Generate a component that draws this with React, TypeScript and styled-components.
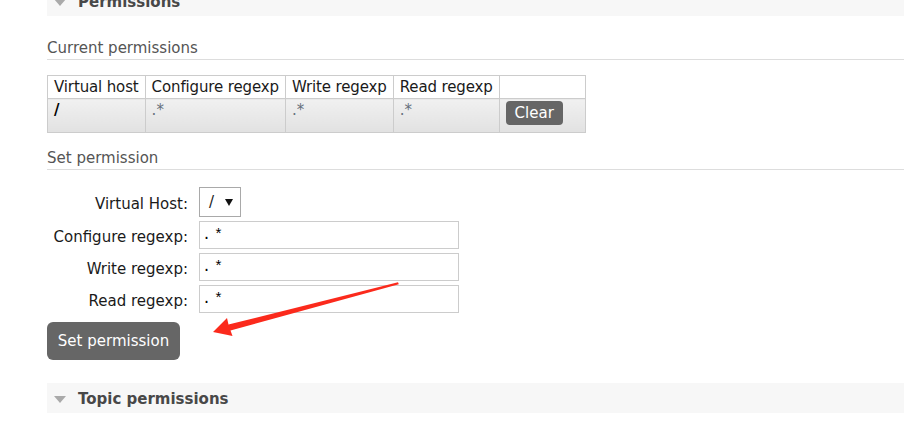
import React from "react";
import styled, { createGlobalStyle } from "styled-components";

const Global = createGlobalStyle`
  html, body { margin: 0; padding: 0; background: #fff; }
  body {
    font-family: "DejaVu Sans", Verdana, sans-serif;
    font-size: 15px;
    line-height: 18px;
    color: #222;
  }
`;

const Page = styled.div`
  position: relative;
  display: flow-root;
  width: 904px;
  height: 428px;
  overflow: hidden;
  padding-left: 47px;
  box-sizing: border-box;
`;

const Band = styled.div<{ $first?: boolean }>`
  display: flex;
  align-items: center;
  gap: 12px;
  box-sizing: border-box;
  height: 30px;
  padding: 2px 0 0 7px;
  margin-top: ${(p) => (p.$first ? "-14px" : "23px")};
  background: #f7f7f7;
  color: #484848;
  font-weight: bold;
`;

const Caret = styled.span`
  width: 0;
  height: 0;
  border-left: 6.5px solid transparent;
  border-right: 6.5px solid transparent;
  border-top: 7px solid #aaa;
`;

const SectionTitle = styled.h3<{ $gap: number }>`
  margin: ${(p) => p.$gap}px 0 0;
  padding: 0 0 2px;
  font-size: 15px;
  font-weight: normal;
  line-height: 18px;
  color: #555;
  border-bottom: 1px solid #ddd;
`;

const Table = styled.table`
  margin-top: 15px;
  border-collapse: collapse;
`;

const HeadCell = styled.th<{ $w?: number }>`
  padding: 2px 6px;
  border: 1px solid #ccc;
  background: #fff;
  text-align: left;
  font-weight: normal;
  letter-spacing: -0.13px;
  white-space: nowrap;
  color: #1a1a1a;
  ${(p) => (p.$w ? `width: ${p.$w}px;` : "")}
`;

const Cell = styled.td<{ $muted?: boolean; $strong?: boolean }>`
  padding: 2px 6px 7px;
  vertical-align: top;
  border: 1px solid #ccc;
  background: linear-gradient(#f1f1f1, #e1e1e1);
  color: ${(p) => (p.$muted ? "#66707c" : "#000")};
  font-weight: ${(p) => (p.$strong ? "bold" : "normal")};
`;

const SmallButton = styled.button`
  display: block;
  width: 57px;
  height: 24px;
  padding: 0;
  border: none;
  border-radius: 4px;
  background: #666;
  color: #fff;
  font-family: "DejaVu Sans", Verdana, sans-serif;
  font-size: 15px;
`;

const Form = styled.div`
  display: grid;
  grid-template-columns: 152px auto;
  justify-content: start;
  align-items: center;
  row-gap: 4px;
  margin-top: 17px;
`;

const Label = styled.label`
  box-sizing: border-box;
  padding: 4px 11px 0 6px;
  text-align: right;
  white-space: nowrap;
  color: #1a1a1a;
`;

const Select = styled.div`
  display: flex;
  align-items: center;
  gap: 11px;
  box-sizing: border-box;
  width: 42px;
  height: 30px;
  padding-left: 9px;
  border: 1px solid #a9a9a9;
  background: #fff;
  color: #222;
`;

const SelectArrow = styled.span`
  width: 0;
  height: 0;
  border-left: 4px solid transparent;
  border-right: 4px solid transparent;
  border-top: 7px solid #111;
`;

const TextInput = styled.input`
  box-sizing: border-box;
  width: 260px;
  height: 28px;
  margin: 0;
  padding: 0 2px;
  border: 1px solid #ccc;
  outline: none;
  background: #fff;
  color: #000;
  font-family: "Liberation Mono", monospace;
  font-size: 15px;
  letter-spacing: 3px;
`;

const PrimaryButton = styled.button`
  display: block;
  box-sizing: border-box;
  width: 133px;
  height: 38px;
  margin-top: 9px;
  padding: 0 0 1px;
  border: none;
  border-radius: 6px;
  background: #666;
  color: #fff;
  font-family: "DejaVu Sans", Verdana, sans-serif;
  font-size: 15px;
`;

const Annotation = styled.svg`
  position: absolute;
  left: 0;
  top: 0;
  pointer-events: none;
`;

const regexRows = [
  { label: "Configure regexp:" },
  { label: "Write regexp:" },
  { label: "Read regexp:" },
];

export default function App() {
  return (
    <>
      <Global />
      <Page>
        <Band $first>
          <Caret />
          <span>Permissions</span>
        </Band>

        <SectionTitle $gap={23}>Current permissions</SectionTitle>
        <Table>
          <thead>
            <tr>
              <HeadCell>Virtual host</HeadCell>
              <HeadCell>Configure regexp</HeadCell>
              <HeadCell>Write regexp</HeadCell>
              <HeadCell>Read regexp</HeadCell>
              <HeadCell $w={73}></HeadCell>
            </tr>
          </thead>
          <tbody>
            <tr>
              <Cell $strong>/</Cell>
              <Cell $muted>.*</Cell>
              <Cell $muted>.*</Cell>
              <Cell $muted>.*</Cell>
              <Cell>
                <SmallButton>Clear</SmallButton>
              </Cell>
            </tr>
          </tbody>
        </Table>

        <SectionTitle $gap={16}>Set permission</SectionTitle>
        <Form>
          <Label>Virtual Host:</Label>
          <Select>
            <span>/</span>
            <SelectArrow />
          </Select>
          {regexRows.map((r) => (
            <React.Fragment key={r.label}>
              <Label>{r.label}</Label>
              <TextInput readOnly value=".*" />
            </React.Fragment>
          ))}
        </Form>
        <PrimaryButton>Set permission</PrimaryButton>

        <Band>
          <Caret />
          <span>Topic permissions</span>
        </Band>

        <Annotation width="904" height="428" viewBox="0 0 904 428">
          <polygon
            points="213,332 227,318 228.5,324.5 398,282.3 398.8,284.3 230.5,330.5 232.5,336"
            fill="#fb2a1c"
          />
        </Annotation>
      </Page>
    </>
  );
}
